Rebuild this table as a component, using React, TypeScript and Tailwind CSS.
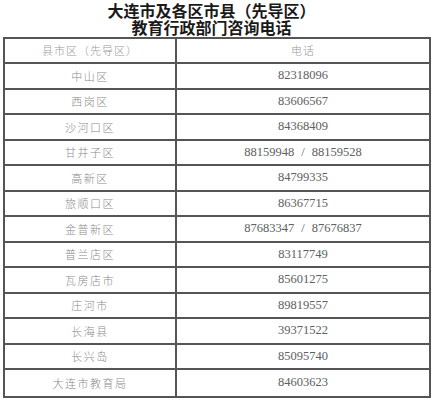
import React from "react";

const rows: [string, string[]][] = [
  ["中山区", ["82318096"]],
  ["西岗区", ["83606567"]],
  ["沙河口区", ["84368409"]],
  ["甘井子区", ["88159948", "88159528"]],
  ["高新区", ["84799335"]],
  ["旅顺口区", ["86367715"]],
  ["金普新区", ["87683347", "87676837"]],
  ["普兰店区", ["83117749"]],
  ["瓦房店市", ["85601275"]],
  ["庄河市", ["89819557"]],
  ["长海县", ["39371522"]],
  ["长兴岛", ["85095740"]],
  ["大连市教育局", ["84603623"]],
];

const cjk = { fontFamily: '"Noto Sans CJK SC", "Noto Sans", sans-serif' };
const title = { fontFamily: '"Liberation Serif", "Noto Sans CJK SC", serif' };
const serif = { fontFamily: '"Liberation Serif", "Noto Sans CJK SC", serif' };

export default function App() {
  return (
    <div className="w-[435px] h-[400px] bg-white overflow-hidden">
      <div
        className="pt-[3px] pr-[12px] text-center text-[16px] leading-[17px] font-bold text-[#1a1a1a]"
        style={title}
      >
        <div className="h-[17px]">大连市及各区市县（先导区）</div>
        <div className="h-[17px]">教育行政部门咨询电话</div>
      </div>
      <div className="ml-[3px] w-[428px] border-2 border-[#555]">
        <div className="grid grid-cols-[172px_1fr] h-[25px] border-b-2 border-[#555]">
          <div
            className="flex items-center justify-center border-r-2 border-[#555] text-[11px] tracking-[1px] text-[#999] font-light"
            style={cjk}
          >
            县市区（先导区）
          </div>
          <div
            className="flex items-center justify-center text-[11px] tracking-[1px] text-[#999] font-light"
            style={cjk}
          >
            电话
          </div>
        </div>
        {rows.map(([name, phones], i) => (
          <div
            key={name}
            className={
              "grid grid-cols-[172px_1fr] h-[25.5px] " +
              (i < rows.length - 1 ? "border-b-2 border-[#555]" : "")
            }
          >
            <div
              className="flex items-center justify-center border-r-2 border-[#555] text-[11px] tracking-[1.5px] text-[#8a8a8a] font-light"
              style={cjk}
            >
              {name}
            </div>
            <div
              className="flex items-center justify-center text-[12.5px] text-[#606060]"
              style={serif}
            >
              {phones[0]}
              {phones[1] && (
                <>
                  <span className="mx-[7px]">/</span>
                  {phones[1]}
                </>
              )}
            </div>
          </div>
        ))}
      </div>
    </div>
  );
}
